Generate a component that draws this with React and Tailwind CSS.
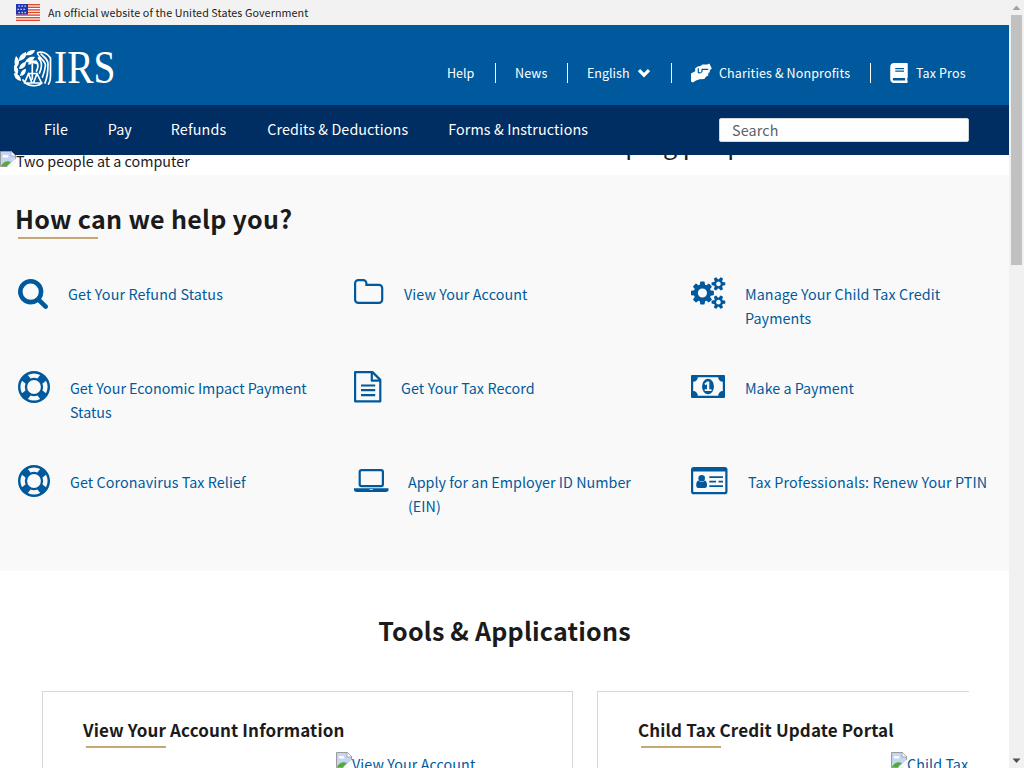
import React from "react";
import { FaBook } from "react-icons/fa";

const blue = "#00599c";

function Flag() {
  return (
    <svg className="h-[17px] w-6 shrink-0" viewBox="0 0 24 17">
      <rect width="24" height="17" fill="#fff" />
      {[0, 1, 2, 3, 4, 5, 6].map((i) => (
        <rect key={i} y={i * 2.6} width="24" height="1.4" fill="#e2482f" />
      ))}
      <rect width="12" height="10.5" fill="#2234b0" />
      {[1.5, 4.7, 7.9].map((y, r) =>
        [2, 5, 8].map((x) => (
          <rect key={x + "-" + y} x={x + (r % 2 ? -0.5 : 0.5)} y={y} width="1.3" height="1.3" fill="#e8ebff" />
        ))
      )}
    </svg>
  );
}

function Logo() {
  return (
    <svg className="h-[37px] w-[104px] shrink-0" viewBox="0 0 104 37">
      <g fill="#fff">
        <path d="M12 5C13 1 16 0 21 0C20 4 17 6 12 5ZM5 11C5 6 7 4 12 2C13 7 10 10 5 11ZM11 12C13 8 16 6 21 7C19 11 16 13 11 12ZM2 18C0 14 0 10 2 6C6 10 6 14 2 18ZM5 19C6 14 9 12 12 12C12 16 10 19 5 19ZM3 25C0 22-1 18 0 15C5 18 5 21 3 25ZM6 26C7 21 9 19 12 19C12 23 10 26 6 26ZM7 31C2 30 0 27 0 23C5 24 7 27 7 31Z" />
        <path d="M14 14.500C14 12 16 10.300 19 10.300C22 10.300 23 12 23 14.500L20 13.500H17.500L16.500 14.500Z" />
      </g>
      <g fill="none" stroke="#fff" strokeWidth="1.7" strokeLinecap="round" strokeLinejoin="round">
        <path d="M24 2.500C28 1 34 3.500 36.500 8V25C36.500 29 36 32 34.500 34M23.500 3C24 7 31 10 31.500 15C31 20 30 23 28.500 27M27 4C31 8 34 9 34 14C34 22 33 28 31 33M24.500 8C29 12 27.500 19 25.500 23M22 11C25 14 24 18 22.500 21M18.300 14V29M14.500 23.500H23M14.500 23.500L10.500 33H18L14.500 23.500M23 23.500L19.500 33H27.500L23 23.500M9 30C13 37 24 37 28 33" />
      </g>
      <text x="40" y="32.500" fill="#fff" fontFamily="Liberation Serif, serif" fontSize="46.500" textLength="61.500" lengthAdjust="spacingAndGlyphs">IRS</text>
    </svg>
  );
}

function BrokenImage() {
  return (
    <svg className="h-4 w-4 shrink-0" viewBox="0 0 16 16">
      <path d="M.5.5H11L15.500 5V15.500H.5Z" fill="#c5d5f4" stroke="#9b9b9b" />
      <path d="M3 6.500a1.500 1.500 0 0 1 2.500-2a1.500 1.500 0 0 1 2.500 2Z" fill="#fff" />
      <path d="M1 15C3 11 7 9 11 11L7 15Z" fill="#55a83a" />
      <path d="M11 0V5H16Z" fill="#fff" stroke="#9b9b9b" strokeWidth=".8" />
      <path d="M7 16L16 7.500V10L10 16Z" fill="#fff" />
      <path d="M10 16L16 10V16Z" fill="#fff" />
    </svg>
  );
}

function SearchIcon() {
  return (
    <svg className="mt-[2px] h-[30px] w-[30px] shrink-0" viewBox="64 128 1664 1664" fill={blue}>
      <path d="M1216 832q0-185-131.5-316.5t-316.5-131.5-316.5 131.5-131.5 316.5 131.5 316.5 316.5 131.5 316.5-131.5 131.5-316.5zm512 832q0 52-38 90t-90 38q-54 0-90-38l-343-342q-179 124-399 124-143 0-273.5-55.5t-225-150-150-225-55.5-273.5 55.5-273.5 150-225 225-150 273.5-55.5 273.5 55.5 225 150 150 225 55.5 273.5q0 220-124 399l343 343q37 37 37 90z" />
    </svg>
  );
}

function FolderIcon() {
  return (
    <svg className="mt-[2px] h-[26px] w-[30px] shrink-0" viewBox="0 0 30 26" fill="none" stroke={blue} strokeWidth="2.200">
      <path d="M1.100 4.300A3.200 3.200 0 0 1 4.300 1.100H9.200A3.200 3.200 0 0 1 12.400 4.300V5.900H25A3.200 3.200 0 0 1 28.200 9.100V20.700A3.200 3.200 0 0 1 25 23.900H4.300A3.200 3.200 0 0 1 1.100 20.700Z" />
    </svg>
  );
}

function CogsIcon() {
  const cog =
    "v140q0 16-149 31-12 27-30 52 51 113 51 138 0 4-4 7-122 71-124 71-8 0-46-47t-52-68q-20 2-30 2t-30-2q-14 21-52 68t-46 47q-2 0-124-71-4-3-4-7 0-25 51-138-18-25-30-52-149-15-149-31v-140q0-16 149-31 13-29 30-52-51-113-51-138 0-4 4-7 4-2 35-20t59-34 30-16q8 0 46 46.5t52 67.5q20-2 30-2t30 2q51-71 92-112l6-2q4 0 124 70 4 3 4 7 0 25-51 138 17 23 30 52 149 15 149 31z";
  return (
    <svg className="h-8 w-[34px] shrink-0 overflow-visible" viewBox="-64 0 1904 1792" fill={blue}>
      <path
        fillRule="evenodd"
        d={
          "M832 896q0-106-75-181t-181-75-181 75-75 181 75 181 181 75 181-75 75-181zm768 512q0-52-38-90t-90-38-90 38-38 90q0 53 37.5 90.5t90.5 37.5 90.5-37.5 37.5-90.5zm0-1024q0-52-38-90t-90-38-90 38-38 90q0 53 37.5 90.5t90.5 37.5 90.5-37.5 37.5-90.5zm-384 421v185q0 10-7 19.5t-16 10.5l-155 24q-11 35-32 76 34 48 90 115 7 11 7 20 0 12-7 19-23 30-82.5 89.5t-78.5 59.5q-11 0-21-7l-115-90q-37 19-77 31-11 108-23 155-7 24-30 24h-186q-11 0-20-7.5t-10-17.5l-23-153q-34-10-75-31l-118 89q-7 7-20 7-11 0-21-8-144-133-144-160 0-9 7-19 10-14 41-53t47-61q-23-44-35-82l-152-24q-10-1-17-9.5t-7-19.5v-185q0-10 7-19.5t16-10.5l155-24q11-35 32-76-34-48-90-115-7-11-7-20 0-12 7-20 22-30 82-89t79-59q11 0 21 7l115 90q34-18 77-32 11-108 23-154 7-24 30-24h186q11 0 20 7.5t10 17.5l23 153q34 10 75 31l118-89q8-7 20-7 11 0 21 8 144 133 144 160 0 8-7 19-12 16-42 54t-45 60q23 48 34 82l152 23q10 2 17 10.5t7 19.5zM1856 1338" +
          cog +
          "M1856 314" +
          cog
        }
      />
    </svg>
  );
}

function LifeRingIcon() {
  return (
    <svg className="h-8 w-8 shrink-0" viewBox="0 0 32 32">
      <circle cx="16" cy="16" r="16" fill={blue} />
      {[0, 90, 180, 270].map((a) => (
        <path key={a} transform={`rotate(${a} 16 16)`} fill="#f9f9f9" d="M9.800 4A13.600 13.600 0 0 1 22.200 4L19.400 7.500A9.100 9.100 0 0 0 12.600 7.500Z" />
      ))}
      <circle cx="16" cy="16" r="6.900" fill="#f9f9f9" />
    </svg>
  );
}

function FileIcon() {
  return (
    <svg className="h-8 w-7 shrink-0" viewBox="0 0 28 32" fill="none" stroke={blue} strokeWidth="2.200" strokeLinejoin="round">
      <path d="M1.100 1.100H18.500L26.300 8.900V30.300H1.100ZM17.800 1.100V9.700H26.300M7 14.500H21.200M7 19.200H21.200M7 24.200H21.200" />
    </svg>
  );
}

function MoneyIcon() {
  return (
    <svg className="mt-1 h-[23px] w-[34px] shrink-0" viewBox="0 0 34 23">
      <rect width="34" height="23" rx="1" fill={blue} />
      <path d="M6.800 2.200H27.200A4.600 4.600 0 0 0 31.800 6.800V16A4.600 4.600 0 0 0 27.200 20.800H6.800A4.600 4.600 0 0 0 2.200 16V6.800A4.600 4.600 0 0 0 6.800 2.200Z" fill="#f9f9f9" />
      <ellipse cx="17" cy="11.500" rx="6" ry="7.700" fill={blue} />
      <path d="M16 6.500H18.300V14.200H20.500V16H13.700V14.200H16V9.200L14.500 10.300L13.400 8.800Z" fill="#f9f9f9" />
    </svg>
  );
}

function LaptopIcon() {
  return (
    <svg className="mt-1 h-[23px] w-[35px] shrink-0" viewBox="0 0 35 23">
      <rect x="5.700" y="1.100" width="23.200" height="16" rx="1.800" fill="none" stroke={blue} strokeWidth="2.200" />
      <path d="M0 19.300H34.500V21C34.500 22.200 33.200 22.900 31.700 22.900H2.800C1.200 22.900 0 22.200 0 21Z" fill={blue} />
      <path d="M15.500 20.500H19" stroke="#f9f9f9" strokeWidth=".7" />
    </svg>
  );
}

function CardIcon() {
  return (
    <svg className="mt-[2px] h-[28px] w-[37px] shrink-0" viewBox="0 0 37 28" fill={blue}>
      <path fillRule="evenodd" d="M2.800 0H33.700A2.800 2.800 0 0 1 36.500 2.800V24.400A2.800 2.800 0 0 1 33.700 27.200H2.800A2.800 2.800 0 0 1 0 24.400V2.800A2.800 2.800 0 0 1 2.800 0ZM2.200 4.500V24.400Q2.200 25 2.800 25H33.700Q34.300 25 34.300 24.400V4.500Z" />
      <circle cx="10.700" cy="11.300" r="3.300" />
      <path d="M7.600 13.500Q10.700 16.500 13.700 13.500Q16 14 16 18.500Q16 21 13.700 21H7.500Q5.200 21 5.200 18.500Q5.200 14 7.600 13.500Z" />
      <path d="M18.300 9.200H32V11H18.300ZM18.300 13.800H25V15.600H18.300ZM27.500 13.800H32V15.600H27.500ZM18.300 18.300H32V20.100H18.300Z" />
    </svg>
  );
}

const services = [
  [SearchIcon, "Get Your Refund Status", "gap-5 tracking-[0.13px]"],
  [FolderIcon, "View Your Account", "gap-5 tracking-[0.09px]"],
  [CogsIcon, "Manage Your Child Tax Credit Payments", "gap-5 tracking-[0.08px]"],
  [LifeRingIcon, "Get Your Economic Impact Payment Status", "gap-5 tracking-[-0.02px]"],
  [FileIcon, "Get Your Tax Record", "gap-[19px] tracking-[0.1px]"],
  [MoneyIcon, "Make a Payment", "gap-5"],
  [LifeRingIcon, "Get Coronavirus Tax Relief", "gap-5 tracking-[0.08px]"],
  [LaptopIcon, "Apply for an Employer ID Number (EIN)", "gap-[19px] tracking-[0.02px]"],
  [CardIcon, "Tax Professionals: Renew Your PTIN", "gap-5 tracking-[0.12px]"],
];

function ChevronIcon() {
  return (
    <svg className="h-[10px] w-[14px]" viewBox="0 0 14 10">
      <path d="M2 2.200L7 7.200L12 2.200" fill="none" stroke="#fff" strokeWidth="3.200" />
    </svg>
  );
}

function HandsIcon() {
  return (
    <svg className="h-5 w-[21px]" viewBox="0 0 21 20">
      <path
        fill="#fff"
        d="M0 10.500L4.200 8.200V5.300L6.800 3.400L9.500 3L11.500 1.600L16.300 1.500L18.300.5L20.800 5.600L18.800 7.200V9.200L17.300 9.900V12.400L15.300 13.400L13.300 15.900L8.700 16.300L5 17.600L2 19.500L0 18.600Z"
      />
      <path
        fill="none"
        stroke="#00599c"
        strokeWidth="1.200"
        strokeLinejoin="round"
        d="M7.300 5.200V9.500Q9.300 10.800 11 8.500V6.300H17.200"
      />
    </svg>
  );
}

function Header() {
  return (
    <header className="flex h-20 shrink-0 items-start bg-[#00599c] pl-[14px] pt-[25px] text-white">
      <Logo />
      <nav className="ml-[329px] mt-[13px] flex h-5 items-center text-[12.53px] leading-5 whitespace-nowrap">
        <a className="w-[48px]">Help</a>
        <a className="w-[72px] border-l border-white pl-[19px] tracking-[0.1px]">News</a>
        <a className="flex w-[104px] items-center gap-[7px] border-l border-white pl-[19px]">
          English <ChevronIcon />
        </a>
        <a className="flex w-[199px] items-center gap-[7px] border-l border-white pl-[19px] tracking-[0.13px]">
          <HandsIcon /> Charities &amp; Nonprofits
        </a>
        <a className="flex items-center gap-2 border-l border-white pl-[19px] tracking-[0.12px]">
          <FaBook className="h-5 w-[18px]" /> Tax Pros
        </a>
      </nav>
    </header>
  );
}

function MainNav() {
  return (
    <div className="flex h-[50px] shrink-0 items-start justify-between bg-[#002d62] pl-11 pr-10">
      <nav className="mt-3 flex gap-10 text-[14.32px] leading-6 whitespace-nowrap text-white">
        <a>File</a>
        <a>Pay</a>
        <a className="-ml-px tracking-[0.15px]">Refunds</a>
        <a className="ml-px tracking-[0.08px]">Credits &amp; Deductions</a>
        <a className="tracking-[0.12px]">Forms &amp; Instructions</a>
      </nav>
      <div className="mt-[13px] flex h-6 w-[250px] items-center rounded-[2px] border border-[#d6d7d9] bg-white pl-3 text-[14.32px] leading-6 tracking-[0.15px] text-[#5b616b]">
        Search
      </div>
    </div>
  );
}

function Card({ title, alt }) {
  return (
    <article className="h-[260px] w-[531px] shrink-0 border border-[#d6d7d9] bg-white pl-10 pt-[25px]">
      <h3 className="text-[17px] leading-[26px] font-bold tracking-[0.14px] whitespace-nowrap text-[#1b1b1b]">{title}</h3>
      <div className="mt-[3px] ml-[3px] h-[2px] w-20 bg-[#c5a875]" />
      <div className="mt-1 ml-[253px] flex text-[14.32px] leading-6 tracking-[0.08px] whitespace-nowrap text-[#00599c]">
        <BrokenImage />
        <span>{alt}</span>
      </div>
    </article>
  );
}

function Scrollbar() {
  return (
    <div className="flex h-full w-[15px] shrink-0 flex-col items-center justify-between bg-[#f1f1f1]">
      <div className="flex flex-col items-center">
        <svg className="h-[15px] w-[15px]" viewBox="0 0 15 15">
          <path d="M3.500 10L7.500 5.500L11.500 10Z" fill="#a3a3a3" />
        </svg>
        <div className="h-[250px] w-[11px] bg-[#c1c1c1]" />
      </div>
      <svg className="h-[15px] w-[15px]" viewBox="0 0 15 15">
        <path d="M3.500 5.500H11.500L7.500 10Z" fill="#505050" />
      </svg>
    </div>
  );
}

export default function App() {
  return (
    <div className="flex h-[768px] w-[1024px] overflow-hidden bg-white font-['Noto_Sans_CJK_SC','Noto_Sans_CJK_JP',sans-serif] text-[#1b1b1b]">
      <div className="flex min-w-0 flex-1 flex-col overflow-hidden">
        <div className="flex h-[25px] shrink-0 items-center gap-2 bg-[#f2f2f2] pl-4 text-[10.74px] leading-6 tracking-[0.08px]">
          <Flag />
          An official website of the United States Government
        </div>
        <Header />
        <MainNav />
        <section className="flex h-5 shrink-0 items-start">
          <div className="relative z-10 -mt-1 flex w-[586px] text-[14.32px] leading-5">
            <BrokenImage />
            <span>Two people at a computer</span>
          </div>
          <div className="h-5 overflow-hidden">
            <p className="-mt-[30px] text-[25.06px] leading-9">Helping people</p>
          </div>
        </section>
        <section className="h-[396px] shrink-0 bg-[#f9f9f9] pt-[23px]">
          <h2 className="ml-[15px] text-[25.06px] leading-10 font-bold tracking-[0.28px]">How can we help you?</h2>
          <div className="-mt-px ml-[18px] h-[2px] w-20 bg-[#c5a875]" />
          <div className="mt-[38px] ml-[18px] grid grid-cols-[336px_337px_306px] grid-rows-[94px_94px_94px]">
            {services.map(([Icon, label, spacing]) => (
              <a key={label} className={`flex items-start pr-5 ${spacing}`}>
                <Icon />
                <span className="mt-[5px] -mr-5 w-[250px] text-[14.32px] leading-6 text-[#00599c]">{label}</span>
              </a>
            ))}
          </div>
        </section>
        <section className="shrink-0 pt-[39px]">
          <h2 className="text-center text-[25.06px] leading-10 font-bold tracking-[0.2px]">Tools &amp; Applications</h2>
          <div className="mr-10 ml-[42px] mt-[41px] flex gap-6 overflow-hidden">
            <Card title="View Your Account Information" alt="View Your Account" />
            <Card title="Child Tax Credit Update Portal" alt="Child Tax Credit" />
          </div>
        </section>
      </div>
      <Scrollbar />
    </div>
  );
}
